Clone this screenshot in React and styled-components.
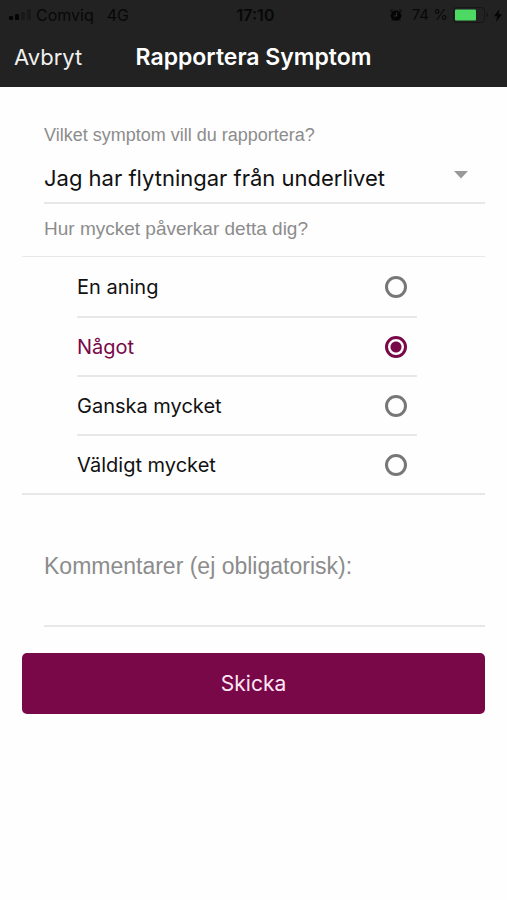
import React, { useState } from "react";
import styled, { createGlobalStyle } from "styled-components";

const accent = "#780848";
const line = "#e8e8e8";
const muted = "#8c8c8c";
const uiFont = 'Inter, "Liberation Sans", sans-serif';
const labelFont = '"Liberation Sans", Arial, sans-serif';

const GlobalStyle = createGlobalStyle`
  *, *::before, *::after { box-sizing: border-box; }
  body { margin: 0; background: #fefefe; color: #111; font-family: ${uiFont}; }
  button, select, textarea, input { font: inherit; color: inherit; margin: 0; }
`;

const Header = styled.header`
  background: #222;
`;

const StatusBar = styled.div`
  display: grid;
  grid-template-columns: 1fr auto 1fr;
  align-items: center;
  height: 30px;
  padding: 0 5px 0 9px;
  color: #080808;
  font-size: 16px;
  line-height: 20px;
`;

const StatusGroup = styled.div`
  display: flex;
  align-items: center;
  justify-content: ${(p) => (p.$end ? "flex-end" : "flex-start")};
  gap: ${(p) => (p.$end ? 5 : 13)}px;
  white-space: nowrap;
`;

const Carrier = styled.span`
  display: flex;
  align-items: center;
  gap: 4px;
`;

const Percent = styled.span`
  margin-left: 4px;
  font-size: 15px;
`;

const Clock = styled.time`
  font-weight: 600;
`;

const NavBar = styled.nav`
  display: grid;
  grid-template-columns: 1fr auto 1fr;
  align-items: center;
  height: 57px;
  padding: 0 14px 4px;
  color: #fff;
`;

const CancelButton = styled.button`
  justify-self: start;
  padding: 0;
  border: 0;
  background: none;
  color: #f0f0f0;
  font-size: 22px;
  line-height: 28px;
  cursor: pointer;
`;

const Title = styled.h1`
  margin: 0;
  font-size: 23px;
  font-weight: 600;
  line-height: 28px;
`;

const Form = styled.form`
  display: flex;
  flex-direction: column;
  padding: 36px 22px 0;
`;

const Field = styled.div`
  display: flex;
  flex-direction: column;
  margin-left: 22px;
  border-bottom: 2px solid ${line};
`;

const Label = styled.label`
  color: ${muted};
  font-family: ${labelFont};
  font-size: 18px;
  line-height: 24px;
`;

const SelectWrap = styled.div`
  display: grid;
  grid-template-columns: 1fr auto;
  align-items: center;
  height: 55px;
  padding-top: 6px;

  > * { grid-row: 1; }
  > svg { grid-column: 2; margin: 0 17px 5px 0; pointer-events: none; }
`;

const Select = styled.select`
  grid-column: 1 / -1;
  width: 100%;
  padding: 0;
  border: 0;
  appearance: none;
  background: none;
  font-size: 22px;
  line-height: 30px;
`;

const Question = styled.p`
  margin: 0;
  padding: 13px 0 15px 22px;
  color: ${muted};
  font-family: ${labelFont};
  font-size: 19px;
  line-height: 24px;
`;

const Options = styled.div`
  padding: 0 68px 0 55px;
  border: solid ${line};
  border-width: 1px 0 2px;
`;

const Option = styled.label`
  display: flex;
  align-items: center;
  justify-content: space-between;
  height: 59px;
  padding-right: 10px;
  font-size: 20px;
  line-height: 28px;
  cursor: pointer;

  &:has(input:checked) { color: ${accent}; }
  & + & { border-top: 2px solid ${line}; }
`;

const Radio = styled.input`
  width: 22px;
  height: 22px;
  border: 3px solid #777;
  border-radius: 50%;
  appearance: none;

  &:checked {
    border-color: ${accent};
    background: radial-gradient(circle, ${accent} 5px, transparent 6px);
  }
`;

const Comment = styled.textarea`
  display: block;
  width: 100%;
  height: 74px;
  padding: 0;
  border: 0;
  outline: 0;
  resize: none;
  background: none;
  font-family: ${labelFont};
  font-size: 23px;
  line-height: 30px;

  &::placeholder { color: ${muted}; opacity: 1; }
`;

const CommentField = styled(Field)`
  margin-top: 56px;
`;

const Submit = styled.button`
  height: 61px;
  margin-top: 26px;
  padding: 0;
  border: 0;
  border-radius: 5px;
  background: ${accent};
  color: #ffe6f5;
  font-size: 21px;
  line-height: 28px;
  cursor: pointer;
`;

const SignalIcon = () => (
  <svg width="23" height="12" viewBox="0 0 23 12" aria-hidden="true">
    <rect x="0" y="7" width="4" height="4" rx="1" fill="#050505" />
    <rect x="6" y="5" width="4" height="6" rx="1" fill="#050505" />
    <rect x="12" y="3" width="4" height="8" rx="1" fill="#191919" />
    <rect x="18" y="0" width="4" height="11" rx="1" fill="#191919" />
  </svg>
);

const AlarmIcon = () => (
  <svg width="14" height="14" viewBox="0 0 14 14" aria-hidden="true">
    <circle cx="7" cy="7.5" r="5.3" fill="#050505" />
    <path d="M1.500 3.500 3.300 1.700M12.500 3.500l-1.800-1.800M3.500 11.500 2.800 12.500M10.500 11.500l.7 1" stroke="#0c0c0c" strokeWidth="1.200" strokeLinecap="round" />
    <path d="M7.500 4.500v3.500H4.800" fill="none" stroke="#2b2b2b" strokeWidth="1.200" />
  </svg>
);

const BatteryIcon = () => (
  <svg width="36" height="16" viewBox="0 0 36 16" aria-hidden="true">
    <rect x="0.500" y="0.500" width="31" height="15" rx="3" fill="none" stroke="#161616" />
    <rect x="2" y="2.500" width="21" height="11" rx="1" fill="#4cd964" />
    <path d="M33.500 5.500c2 .8 2 4.200 0 5z" fill="#161616" />
  </svg>
);

const BoltIcon = () => (
  <svg width="8" height="13" viewBox="0 0 8 13" aria-hidden="true">
    <path d="M5.500 0 0 7.300h3.200L2 13l6-7.800H4.700z" fill="#050505" />
  </svg>
);

const CaretIcon = () => (
  <svg width="14" height="8" viewBox="0 0 14 8" aria-hidden="true">
    <path d="M0 0h14L7 7.500z" fill="#999" />
  </svg>
);

const levels = ["En aning", "Något", "Ganska mycket", "Väldigt mycket"];

export default function App() {
  const [level, setLevel] = useState("Något");

  return (
    <>
      <GlobalStyle />
      <Header>
        <StatusBar>
          <StatusGroup>
            <Carrier>
              <SignalIcon />
              Comviq
            </Carrier>
            <span>4G</span>
          </StatusGroup>
          <Clock>17:10</Clock>
          <StatusGroup $end>
            <AlarmIcon />
            <Percent>74 %</Percent>
            <BatteryIcon />
            <BoltIcon />
          </StatusGroup>
        </StatusBar>
        <NavBar>
          <CancelButton type="button">Avbryt</CancelButton>
          <Title>Rapportera Symptom</Title>
        </NavBar>
      </Header>
      <Form onSubmit={(e) => e.preventDefault()}>
        <Field>
          <Label htmlFor="symptom">Vilket symptom vill du rapportera?</Label>
          <SelectWrap>
            <Select id="symptom" name="symptom">
              <option>Jag har flytningar från underlivet</option>
            </Select>
            <CaretIcon />
          </SelectWrap>
        </Field>
        <Question id="impact">Hur mycket påverkar detta dig?</Question>
        <Options role="radiogroup" aria-labelledby="impact">
          {levels.map((name) => (
            <Option key={name}>
              {name}
              <Radio
                type="radio"
                name="impact"
                value={name}
                checked={level === name}
                onChange={() => setLevel(name)}
              />
            </Option>
          ))}
        </Options>
        <CommentField>
          <Comment
            name="comment"
            aria-label="Kommentarer (ej obligatorisk)"
            placeholder="Kommentarer (ej obligatorisk):"
          />
        </CommentField>
        <Submit type="submit">Skicka</Submit>
      </Form>
    </>
  );
}
